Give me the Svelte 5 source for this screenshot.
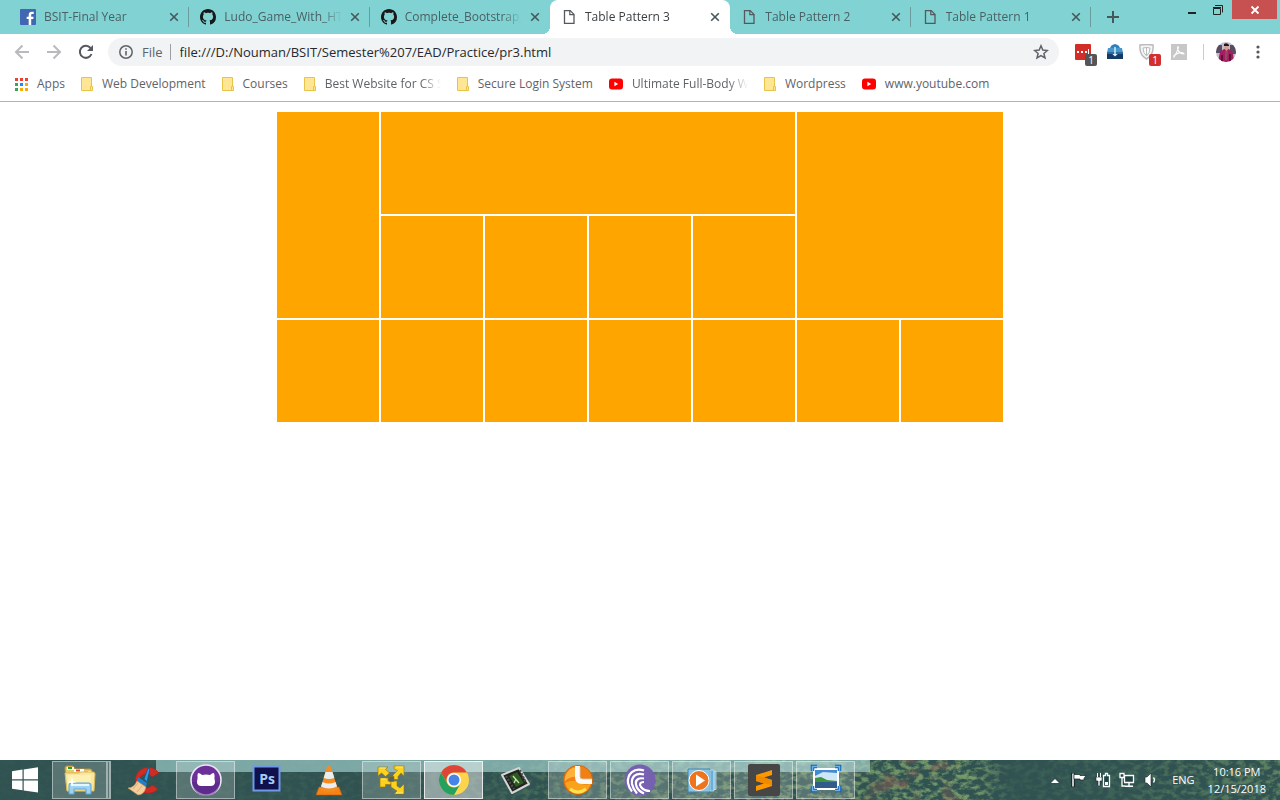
<script>
  const tabs = [
    { title: 'BSIT-Final Year', icon: 'facebook' },
    { title: 'Ludo_Game_With_HTML', icon: 'github' },
    { title: 'Complete_Bootstrap_4', icon: 'github' },
    { title: 'Table Pattern 3', icon: 'page', active: true },
    { title: 'Table Pattern 2', icon: 'page' },
    { title: 'Table Pattern 1', icon: 'page' }
  ];

  const bookmarks = [
    { title: 'Apps', icon: 'apps' },
    { title: 'Web Development', icon: 'folder' },
    { title: 'Courses', icon: 'folder' },
    { title: 'Best Website for CS S', icon: 'folder', long: true },
    { title: 'Secure Login System', icon: 'folder' },
    { title: 'Ultimate Full-Body W', icon: 'youtube', long: true },
    { title: 'Wordpress', icon: 'folder' },
    { title: 'www.youtube.com', icon: 'youtube' }
  ];

  const apps = [
    { name: 'File Explorer', icon: 'explorer', open: true, stacked: true },
    { name: 'CCleaner', icon: 'ccleaner' },
    { name: 'GitHub Desktop', icon: 'ghdesktop', open: true },
    { name: 'Photoshop', icon: 'photoshop' },
    { name: 'VLC', icon: 'vlc' },
    { name: 'VMware', icon: 'vmware', open: true },
    { name: 'Chrome', icon: 'chrome', open: true, current: true },
    { name: 'Camtasia', icon: 'film' },
    { name: 'Clock', icon: 'clock', open: true },
    { name: 'BitTorrent', icon: 'torrent', open: true },
    { name: 'Media Player', icon: 'media', open: true },
    { name: 'Sublime Text', icon: 'sublime', open: true },
    { name: 'Photo Viewer', icon: 'photo', open: true }
  ];

  // Each row lists the [colspan, rowspan] of its cells.
  const rows = [
    [[1, 2], [4, 1], [2, 2]],
    [[1, 1], [1, 1], [1, 1], [1, 1]],
    [[1, 1], [1, 1], [1, 1], [1, 1], [1, 1], [1, 1], [1, 1]]
  ];

  let address = $state('file:///D:/Nouman/BSIT/Semester%207/EAD/Practice/pr3.html');
</script>

{#snippet cross()}
  <svg width="10" height="10" viewBox="0 0 10 10"><path d="M1.2 1.2 8.8 8.8M8.8 1.2 1.2 8.8" stroke="currentColor" stroke-width="1.6" fill="none" /></svg>
{/snippet}

{#snippet smallIcon(name)}
  {#if name === 'facebook'}
    <svg width="16" height="16" viewBox="0 0 16 16"><rect width="16" height="16" rx="1" fill="#4267b2" /><path d="M8.7 16V10H6.7V7.7h2V6c0-2.1 1.2-3.2 3.1-3.2.9 0 1.7.1 1.9.1v2.2h-1.3c-1 0-1.2.5-1.2 1.2v1.4h2.4l-.3 2.3h-2.1v6z" fill="#fff" /></svg>
  {:else if name === 'github'}
    <svg width="16" height="16" viewBox="0 0 16 16"><path fill="#191717" d="M8 0C3.58 0 0 3.58 0 8c0 3.54 2.29 6.53 5.47 7.59.4.07.55-.17.55-.38 0-.19-.01-.82-.01-1.49-2.01.37-2.53-.49-2.69-.94-.09-.23-.48-.94-.82-1.13-.28-.15-.68-.52-.01-.53.63-.01 1.08.58 1.23.82.72 1.21 1.87.87 2.33.66.07-.52.28-.87.51-1.07-1.78-.2-3.64-.89-3.64-3.95 0-.87.31-1.59.82-2.15-.08-.2-.36-1.02.08-2.12 0 0 .67-.21 2.2.82.64-.18 1.32-.27 2-.27s1.36.09 2 .27c1.53-1.04 2.2-.82 2.2-.82.44 1.1.16 1.92.08 2.12.51.56.82 1.27.82 2.15 0 3.07-1.87 3.75-3.65 3.95.29.25.54.73.54 1.48 0 1.07-.01 1.93-.01 2.2 0 .21.15.46.55.38A8.01 8.01 0 0 0 16 8c0-4.42-3.58-8-8-8z" /></svg>
  {:else if name === 'page'}
    <svg width="16" height="16" viewBox="0 0 16 16"><path d="M3.5 1.6h5.7l3.8 3.8v9H3.5z" fill="none" stroke="#55585c" stroke-width="1.3" /><path d="M8.8 1.5v4.2h4.3" fill="none" stroke="#55585c" stroke-width="1.2" /></svg>
  {:else if name === 'apps'}
    <svg width="13" height="13" viewBox="0 0 13 13"><path fill="#ea4335" d="M0 0h3v3H0zM5 0h3v3H5zM10 0h3v3h-3z" /><path fill="#34a853" d="M0 5h3v3H0zM0 10h3v3H0z" /><path fill="#2684fc" d="M5 5h3v3H5z" /><path fill="#f9ab00" d="M10 5h3v3h-3zM5 10h3v3H5zM10 10h3v3h-3z" /></svg>
  {:else if name === 'folder'}
    <svg width="12" height="14" viewBox="0 0 12 14"><path d="M.5.5h10v9h1v4H.5z" fill="#ffe694" stroke="#e8c34a" /><path d="M9.5 13.5V9.5h1" fill="none" stroke="#e8c34a" /></svg>
  {:else if name === 'youtube'}
    <svg width="14" height="14" viewBox="0 0 14 14"><rect y="1.5" width="14" height="11" rx="3" fill="#f00" /><path d="M5.4 4.8 9.2 7 5.4 9.2z" fill="#fff" /></svg>
  {/if}
{/snippet}

{#snippet appIcon(name)}
  <svg width="32" height="32" viewBox="0 0 32 32">
    {#if name === 'explorer'}
      <path d="M1 4q0-2 2-2h6l2 3h15q2 0 2 2v20H3z" fill="#e9c968" stroke="#b8933c" />
      <path d="M3 3h7v3H3z" fill="#fff8dc" /><path d="M4 3h4v2H4z" fill="#17a72c" />
      <path d="M10 5h10v3H10z" fill="#fff" /><path d="M12 5.500h4v2h-4z" fill="#e04a2c" />
      <path d="M18 7h9v3h-9z" fill="#fff" /><path d="M20 7.500h4v2h-4z" fill="#279be0" />
      <path d="M1 9h14l2-1h12q2 0 2 2l-1 17H3z" fill="#f8e7a0" stroke="#d8b95c" />
      <path d="M4 11h23v12H4z" fill="#fff3ba" opacity=".7" />
      <path d="M5 30V21q0-2 2-2h18q2 0 2 2v9h-5v-5H10v5z" fill="#9cd3f2" stroke="#5ba5cf" />
      <path d="M7 21h18" stroke="#e4f6ff" stroke-width="2" /><path d="m8 13 1 4 4 1-4 1-1 4-1-4-4-1 4-1z" fill="#fff" />
    {:else if name === 'ccleaner'}
      <path d="M31 9A13 13 0 1 0 30 25L24 21A7 7 0 1 1 24 13z" fill="#cf2d24" stroke="#a3231c" stroke-width=".6" />
      <path d="m16 15 4-11 2 1-3 13z" fill="#2c9ae8" stroke="#0e548f" stroke-width=".8" />
      <path d="m10 13 9 6-1 4-9-6z" fill="#1d80ce" />
      <path d="m9 17 9 6q-2 8-8 8L0 24q6 0 9-7z" fill="#f3cf9e" stroke="#cf935b" stroke-width=".6" /><path d="m5 25 5-6M9 28l5-6" stroke="#d69b66" stroke-width=".7" fill="none" />
    {:else if name === 'ghdesktop'}
      <circle cx="16" cy="16" r="15" fill="#6b3199" stroke="#eee5f6" stroke-width="1.600" />
      <path d="M2 18a14 14 0 0 0 28 0z" fill="#4d257d" opacity=".5" />
      <path d="M8 9q2 0 4 2 4-1 8 0 2-2 4-2 1 3 .4 5Q26.500 22 21 22H11Q5.500 22 7.600 14 7 11 8 9z" fill="#fff" />
    {:else if name === 'photoshop'}
      <rect x="1.500" y="2.500" width="26" height="24" fill="#10104c" stroke="#6e9ae6" stroke-width="2" /><text x="15" y="20" text-anchor="middle" class="ps">Ps</text>
    {:else if name === 'vlc'}
      <path d="M5 23h20l3 8H2z" fill="#f58317" stroke="#bd5710" stroke-width=".6" />
      <path d="M13 3q2-2 4 0l7 23q-9 4-18 0z" fill="#f68b1f" />
      <path d="m11.500 8 7 0 1.800 6q-5.300 2-10.600 0zM8.500 18q6.500 3 13 0l1.500 4.500q-8 4-16 0z" fill="#e9eef0" />
    {:else if name === 'vmware'}
      <g fill="#fbd21f" stroke="#9a7408" stroke-width=".6" stroke-linejoin="round">
        <path d="M2 3h10l-2.500 2.500 4 3.500-4 3.500-4-3.500L2 12z" />
        <path d="M18 2h10v10l-3-3-3 3.500v3h-5V11l4.500-4.500L18 5z" />
        <path d="M4 14h8v3h3v3.500H9.500V23H4z" />
        <path d="M15 17h6v5l3 2 4-4v10H18l3-3-6-4z" />
      </g><path d="M13 12.500h5v5h-5z" fill="#53635f" stroke="#9a7408" stroke-width=".6" /><path d="M3.500 4h6M20 3h7M5 15h5M20 29h7" stroke="#fff08a" stroke-width=".8" />
    {:else if name === 'chrome'}
      <circle cx="16" cy="16" r="15" fill="#fdd44b" /><path d="M3 8.500A15 15 0 0 1 29 8.500H16A7.500 7.500 0 0 0 9.500 19.800z" fill="#dc4537" /><path d="M3 8.500A15 15 0 0 0 16 31l6.500-11.300A7.500 7.500 0 0 1 9.500 19.700z" fill="#24a15e" /><circle cx="16" cy="16" r="7" fill="#fff" /><circle cx="16" cy="16" r="5.500" fill="#4784e8" />
    {:else if name === 'film'}
      <path d="m2 11 17-7 10 16-17 9z" fill="#202321" stroke="#d3d6d2" stroke-width="2" stroke-linejoin="round" /><path d="m9 12 8-4 7 11-8 4z" fill="#2e5a22" /><path d="m6 12 8 13m6-19 6 13" stroke="#4b514d" stroke-width="2.200" stroke-dasharray="2 1.500" /><path d="m13 12 6 7m-3-4-2 4" stroke="#c7e3b0" stroke-width="1.300" fill="none" />
    {:else if name === 'clock'}
      <circle cx="16" cy="16" r="14.600" fill="#f08011" stroke="#cf5c0b" stroke-width=".8" />
      <path d="M3 13Q7 2 16 3v10Q9 12 3 17z" fill="#ffb13b" />
      <path d="M3 19q10-5 17 1 5 2 9-1-4 11-13 11T3 19z" fill="#f9a21b" />
      <path d="M8 25q8 6 16 0" stroke="#ffe14f" stroke-width="3" fill="none" />
      <path d="M15.500 2v11q0 4.500 4.500 4.500h10" stroke="#fbf9f6" stroke-width="5" fill="none" /><path d="M18 3v9.500q0 2.500 3 2.500h9" stroke="#cfcac5" stroke-width=".8" fill="none" />
    {:else if name === 'torrent'}
      <circle cx="16" cy="16" r="15.500" fill="#7661b0" />
      <g fill="none" stroke="#fff" stroke-width="2.200">
        <path d="M20 6.500C10 3 3 10 4 19q1 5 4 8.500" />
        <path d="M20 10.500C12 8 7 13 8 20q1 5 5 9.500" />
        <path d="M20 14.500c-5-1-9 1-8 6q1 6 8 9" />
        <path d="M20 18c-4 0-5 2-3 5q3 4 9 4" />
      </g>
    {:else if name === 'media'}
      <path d="M2 5h22v23H2z" fill="#8bc4e4" stroke="#3f86b8" /><path d="M24 6h4v21h-4zM28 7.500h2v18h-2z" fill="#6caed6" stroke="#c9e6f5" stroke-width=".7" /><circle cx="13" cy="16.500" r="10" fill="#ef751c" stroke="#fff" /><path d="m10 10.500 9 6-9 6z" fill="#fff" />
    {:else if name === 'sublime'}
      <rect width="32" height="32" rx="2" fill="#464646" /><path d="M24 6 8 11v6l8 2.500L8 22v5l16-5v-6l-8-2.500 8-2.500z" fill="#ff9800" /><path d="m8 11 16 5v5.500L8 17z" fill="#f08a00" />
    {:else if name === 'photo'}
      <path d="M3 4h26v22H3z" fill="#fff" /><path d="M5 6h22v18H5z" fill="#438bd0" /><path d="m5 12 8-4 14 1v8H5z" fill="#cfe6f6" /><path d="m5 14 6-1 6 3 10 1v2H5z" fill="#3c9440" /><path d="M5 18h22v6H5z" fill="#315b88" /><path d="M2.500 7V2.500H7m18 0h4.500V7m0 15v4.500H25M7 26.500H2.500V22" fill="none" stroke="#155fae" stroke-width="3.500" /><path d="M2.500 7V2.500H7m18 0h4.500V7m0 15v4.500H25M7 26.500H2.500V22" fill="none" stroke="#69b5f1" stroke-width="1.500" />
    {/if}
  </svg>
{/snippet}

<div class="screen">
  <header>
    <div class="strip">
      <nav class="tabs" aria-label="Open tabs">
        {#each tabs as tab}
          <div class="tab" class:active={tab.active}>
            {@render smallIcon(tab.icon)}
            <span class="title">{tab.title}</span>
            <button class="close" aria-label="Close tab">{@render cross()}</button>
          </div>
        {/each}
      </nav>
      <button class="add" aria-label="New tab"><svg width="14" height="14" viewBox="0 0 14 14"><path d="M7 1v12M1 7h12" stroke="#45585a" stroke-width="2" /></svg></button>
      <div class="window">
        <button aria-label="Minimize"><svg width="10" height="12" viewBox="0 0 10 12"><path d="M0 8h8v2H0z" fill="#222" /></svg></button>
        <button aria-label="Restore"><svg width="12" height="12" viewBox="0 0 12 12"><path d="M.5 4.500h7v6h-7z" fill="none" stroke="#222" /><path d="M0 3.500h8M2 1.500h7.500v7" fill="none" stroke="#222" /></svg></button>
        <button class="quit" aria-label="Close"><svg width="10" height="10" viewBox="0 0 10 10"><path d="m1.500 1.500 7 7m0-7-7 7" stroke="#fff" stroke-width="1.800" /></svg></button>
      </div>
    </div>

    <div class="toolbar">
      <div class="nav">
        <button aria-label="Back"><svg width="16" height="16" viewBox="0 0 16 16"><path d="M15 8H2m6.500-6.500L2 8l6.500 6.500" fill="none" stroke="#b8babd" stroke-width="2" /></svg></button>
        <button aria-label="Forward"><svg width="16" height="16" viewBox="0 0 16 16"><path d="M1 8h13M7.500 1.500 14 8l-6.500 6.500" fill="none" stroke="#b8babd" stroke-width="2" /></svg></button>
        <button aria-label="Reload"><svg width="16" height="16" viewBox="0 0 16 16"><path d="M13.500 10A6 6 0 1 1 12.500 4" fill="none" stroke="#55595e" stroke-width="2" /><path d="M15 1v6H9z" fill="#55595e" /></svg></button>
      </div>
      <div class="omnibox">
        <svg width="14" height="14" viewBox="0 0 14 14"><circle cx="7" cy="7" r="6.200" fill="none" stroke="#5f6368" stroke-width="1.500" /><path d="M6.200 3.200h1.600v1.600H6.200zm0 2.800h1.600v4.600H6.200z" fill="#5f6368" /></svg>
        <label for="address">File</label>
        <input id="address" type="text" bind:value={address} />
        <button aria-label="Bookmark this page"><svg width="16" height="16" viewBox="0 0 16 16"><path d="m8 1.800 1.800 4.300 4.600.4-3.500 3 1.100 4.500L8 11.600 4 14l1.100-4.500-3.500-3 4.600-.4z" fill="none" stroke="#5f6368" stroke-width="1.500" /></svg></button>
      </div>
      <div class="extensions">
        <button aria-label="Password manager"><svg width="16" height="16" viewBox="0 0 16 16"><rect width="16" height="16" rx="1" fill="#d32d27" /><path d="M2 7h2v2H2zm4 0h2v2H6zm4 0h2v2h-2zm3-2h1v5h-1z" fill="#fff" /></svg><span class="badge dark">1</span></button>
        <button aria-label="Downloader"><svg width="16" height="16" viewBox="0 0 16 16"><path d="M3 5q0-4 5-5 5 1 5 5z" fill="#2e80c0" /><path d="M1 4h14l1 5H0z" fill="#4797cb" /><path d="M0 8h16v7H0z" fill="#143b68" /><path d="M0 8h16v2H0z" fill="#286ca5" /><path d="M7.300 3h1.400v7h2L8 12.500 5.300 10h2z" fill="#d6f2ff" /></svg></button>
        <button aria-label="Shield"><svg width="16" height="16" viewBox="0 0 16 16"><path d="M1 1q7-1 13 0 1 10-6.500 14Q0 11 1 1z" fill="#f5f5f5" stroke="#bbb" stroke-width="1.500" /><path d="M4 4q4-1 7 0 0 5-3.500 8Q4 9 4 4z" fill="#fff" stroke="#bbb" /><path d="M7.500 3v8" stroke="#bbb" /></svg><span class="badge red">1</span></button>
        <button aria-label="PDF"><svg width="16" height="16" viewBox="0 0 16 16"><rect width="16" height="16" fill="#c7c7c7" /><path d="M7.500 2.500Q7 7 3 13q-1-2 5-4 5-1 5 1-4 0-6-4-1-3 .5-3.500" fill="none" stroke="#fff" stroke-width="1.200" /></svg></button>
      </div>
      <span class="rule"></span>
      <button class="avatar" aria-label="Profile"><svg width="20" height="20" viewBox="0 0 20 20"><defs><clipPath id="round"><circle cx="10" cy="10" r="10" /></clipPath></defs><g clip-path="url(#round)"><path fill="#c0bec9" d="M0 0h20v20H0z" /><path fill="#594b61" d="M0 3h6v8H0zm14 0h6v9h-6z" /><path fill="#a81b61" d="M4 10 8 7h5l4 4 1 9H2z" /><path fill="#5d1236" d="M5 13h2v7H5zm8-1h2v8h-2z" /><path fill="#d99b8a" d="M8.500 3h4v4l-2 2-2-2z" /><path fill="#211521" d="M8 2q3-2 5 1v1H8z" /><path fill="#8f4a68" d="M9 9h3l-1 9H9z" /></g></svg></button>
      <button class="more" aria-label="Menu"><svg width="4" height="14" viewBox="0 0 4 14"><g fill="#55595e"><circle cx="2" cy="2" r="1.600" /><circle cx="2" cy="7" r="1.600" /><circle cx="2" cy="12" r="1.600" /></g></svg></button>
    </div>

    <nav class="bookmarks" aria-label="Bookmarks">
      {#each bookmarks as mark}
        <a href="#top">
          {@render smallIcon(mark.icon)}
          <span class:faded={mark.long}>{mark.title}</span>
        </a>
      {/each}
    </nav>
  </header>

  <main>
    <table aria-label="Table Pattern 3">
      <tbody>
        {#each rows as row}
          <tr>
            {#each row as [cols, span]}
              <td colspan={cols} rowspan={span}></td>
            {/each}
          </tr>
        {/each}
      </tbody>
    </table>
  </main>

  <footer>
    <svg class="scenery" width="100%" height="100%" aria-hidden="true">
      <defs>
        <filter id="leaves" x="0" y="0" width="100%" height="100%" color-interpolation-filters="sRGB"><feTurbulence type="fractalNoise" baseFrequency=".13 .2" numOctaves="4" seed="8" /><feColorMatrix values="0 0 0 0 .5  0 0 0 0 .64  0 0 0 0 .43  3.600 0 0 0 -1.500" /></filter>
        <filter id="rust" x="0" y="0" width="100%" height="100%" color-interpolation-filters="sRGB"><feTurbulence type="fractalNoise" baseFrequency=".05 .06" numOctaves="5" seed="21" /><feColorMatrix values="0 0 0 0 .54  0 0 0 0 .36  0 0 0 0 .33  0 5 0 0 -2.500" /></filter>
        <linearGradient id="spread"><stop offset="0" stop-color="#fff" stop-opacity=".04" /><stop offset=".35" stop-color="#fff" stop-opacity=".12" /><stop offset=".5" stop-color="#fff" stop-opacity=".5" /><stop offset=".76" stop-color="#fff" stop-opacity=".9" /><stop offset=".79" stop-color="#fff" stop-opacity=".12" /><stop offset=".87" stop-color="#fff" stop-opacity=".2" /><stop offset="1" stop-color="#fff" stop-opacity=".6" /></linearGradient>
        <linearGradient id="patch"><stop offset=".66" stop-color="#fff" stop-opacity="0" /><stop offset=".7" stop-color="#fff" stop-opacity=".6" /><stop offset=".74" stop-color="#fff" stop-opacity=".4" /><stop offset=".76" stop-color="#fff" stop-opacity="0" /></linearGradient>
        <mask id="spreadMask"><rect width="100%" height="100%" fill="url(#spread)" /></mask>
        <mask id="patchMask"><rect width="100%" height="100%" fill="url(#patch)" /></mask>
      </defs>
      <rect width="100%" height="100%" fill="#305352" />
      <g mask="url(#spreadMask)"><rect width="100%" height="100%" filter="url(#leaves)" /></g>
      <g mask="url(#patchMask)"><rect width="100%" height="100%" filter="url(#rust)" /></g>
      <rect x="156" width="714" height="12" fill="#a4d4d1" opacity=".65" />
    </svg>
    <button class="start" aria-label="Start"><svg width="28" height="26" viewBox="0 0 28 26"><path d="M1 4.200 11.500 2.600v9.700H1zM12.700 2.400 27 .2v12.100H12.700zM1 13.500h10.500v9.700L1 21.700zM12.700 13.500H27v12l-14.300-2.100z" fill="#fff" /></svg></button>
    <div class="apps">
      {#each apps as app}
        <button class="app" class:open={app.open} class:current={app.current} class:stacked={app.stacked} aria-label={app.name}>{@render appIcon(app.icon)}</button>
      {/each}
    </div>
    <div class="tray">
      <button class="expand" aria-label="Show hidden icons"><svg width="8" height="16" viewBox="0 0 8 16"><path d="m0 11 4-4 4 4z" fill="#fff" /></svg></button>
      <button aria-label="Action center"><svg width="16" height="16" viewBox="0 0 16 16"><path d="M2 1v14" stroke="#122" stroke-width="3.500" /><path d="M2 1.500v13" stroke="#fff" stroke-width="1.500" /><path d="M3 2.500h6v1h6l-2 3V8H9V7H3z" fill="#fff" stroke="#122" stroke-width=".7" /></svg></button>
      <button aria-label="Battery"><svg width="16" height="16" viewBox="0 0 16 16"><path d="M1 5h6v4H5v5H3V9H1z" fill="#fff" stroke="#122" stroke-width=".6" /><path d="M2.500 1v4m3-4v4" stroke="#fff" /><path d="M8.500 3.500h2v-2h2v2h2v11h-6z" fill="#244" stroke="#fff" stroke-width="1.300" /><path d="M10 10h3v3h-3z" fill="#fff" /></svg></button>
      <button aria-label="Network"><svg width="16" height="16" viewBox="0 0 16 16"><path d="M5.500 3.500h9v7h-9z" fill="#244" stroke="#fff" stroke-width="1.300" /><path d="M10 11v3m-4 .3h8" stroke="#fff" stroke-width="1.400" /><path d="M1 1.500h4v4H1zM3 6v8h3" fill="#244" stroke="#fff" stroke-width="1.300" /></svg></button>
      <button aria-label="Volume"><svg width="16" height="16" viewBox="0 0 16 16"><path d="M2 5h2l4-4v14l-4-4H2z" fill="#fff" stroke="#122" stroke-width=".6" /><path d="M10.500 5.500q2 2.500 0 5" fill="none" stroke="#fff" stroke-width="1.300" /></svg></button>
      <span class="lang">ENG</span>
      <div class="time"><span>10:16 PM</span><span>12/15/2018</span></div>
    </div>
  </footer>
</div>

<style>
  :global(body) { margin: 0; background: #fff; }
  .screen { display: flex; flex-direction: column; min-height: 100vh; font-family: "Open Sans", "Noto Sans", sans-serif; font-size: 12px; line-height: 16px; color: #5f6368; }
  svg { display: block; flex: none; }
  button { display: flex; align-items: center; justify-content: center; margin: 0; padding: 0; border: 0; background: none; color: inherit; font: inherit; }

  .strip { display: flex; height: 34px; padding-left: 9px; background: #81d3d3; }
  .tabs { display: flex; flex: 0 1 1082px; min-width: 0; }
  .tab { position: relative; display: flex; flex: 1 1 0; align-items: center; gap: 8px; min-width: 0; padding: 0 10px 0 11px; box-sizing: border-box; color: #4a6064; }
  .tab:not(.active)::after { content: ""; position: absolute; right: 0; top: 7px; width: 1px; height: 20px; background: #6a9b9d; }
  .tab:has(+ .active)::after { display: none; }
  .title { flex: 1; min-width: 0; overflow: hidden; white-space: nowrap; mask-image: linear-gradient(90deg, #000 calc(100% - 20px), transparent); }
  .close { width: 10px; height: 16px; color: #46575a; }
  .tab.active { border-radius: 8px 8px 0 0; background: #fff; color: #3c4043; }
  .active::before, .active::after { content: ""; position: absolute; bottom: 0; width: 8px; height: 8px; }
  .active::before { left: -8px; background: radial-gradient(circle at 0 0, transparent 8px, #fff 8px); }
  .active::after { right: -8px; background: radial-gradient(circle at 100% 0, transparent 8px, #fff 8px); }
  .add { width: 44px; }
  .window { display: flex; align-items: flex-start; margin-left: auto; }
  .window button { width: 26px; height: 19px; }
  .window .quit { width: 45px; margin-right: 3px; background: #c75050; }

  .toolbar { display: flex; align-items: center; height: 36px; padding: 0 20px 0 14px; }
  .nav { display: flex; gap: 16px; margin-right: 14px; }
  .omnibox { display: flex; flex: 1; align-items: center; height: 28px; padding: 0 10px 0 11px; border-radius: 14px; background: #f1f3f4; font-size: 13px; }
  .omnibox label { margin-left: 9px; padding-right: 7px; border-right: 1px solid #9aa0a6; }
  .omnibox input { flex: 1; min-width: 0; padding: 0 9px; border: 0; outline: 0; background: none; color: #27292c; font: inherit; }
  .extensions { display: flex; gap: 16px; margin-left: 16px; }
  .extensions button { position: relative; }
  .badge { position: absolute; left: 10px; top: 10px; width: 12px; height: 12px; border-radius: 2px; color: #fff; font-size: 10px; line-height: 12px; text-align: center; }
  .dark { background: #555; }
  .red { background: #d2302c; }
  .rule { width: 1px; height: 16px; margin: 0 12px 0 16px; background: #ccc; }
  .more { margin-left: 20px; }

  .bookmarks { display: flex; align-items: center; gap: 16px; height: 28px; padding: 0 15px 3px; border-bottom: 1px solid #b3b4b5; }
  .bookmarks a { display: flex; align-items: center; gap: 9px; color: #5f6368; text-decoration: none; white-space: nowrap; }
  .faded { width: 116px; overflow: hidden; mask-image: linear-gradient(90deg, #000 96px, transparent); }

  main { flex: 1; padding: 8px; }
  table { margin: 0 auto; border-spacing: 2px; }
  td { width: 100px; height: 100px; padding: 1px; background: #ffa500; }

  footer { position: relative; display: flex; height: 40px; color: #fff; }
  .scenery { position: absolute; inset: 0; }
  .start, .apps, .tray { position: relative; }
  .start { width: 50px; }
  .apps { display: flex; gap: 3px; padding: 1px 0 1px 2px; }
  .app { width: 59px; box-sizing: border-box; border: 1px solid transparent; }
  .open { border-color: #ffffff70; background: #ffffff30; }
  .current { border-color: #ffffffc0; background: #ffffff75; }
  .stacked { border-right: 5px double #ffffff70; }
  .ps { font: bold 14px "Open Sans", sans-serif; fill: #a2cdf7; }
  .tray { display: flex; align-items: center; margin-left: auto; padding-right: 14px; gap: 8px; }
  .expand { padding-right: 4px; }
  .lang { margin-left: 5px; font-size: 11px; }
  .time { display: flex; flex-direction: column; align-items: center; margin-left: 5px; font-size: 11px; line-height: 17px; }
</style>
